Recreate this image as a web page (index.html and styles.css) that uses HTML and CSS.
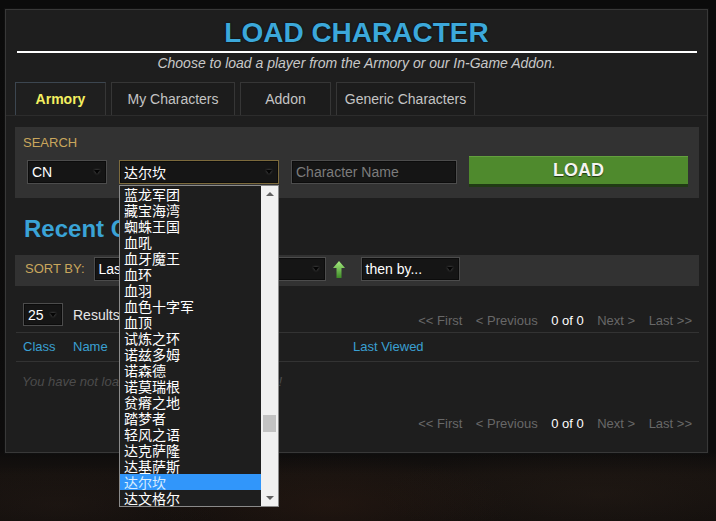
FILE: index.html
```html
<!DOCTYPE html>
<html lang="en">
<head>
    <meta charset="UTF-8">
    <title>Load Character</title>
    <link rel="stylesheet" href="styles.css">
</head>
<body>
    <div class="panel">
        <h1 class="title">LOAD CHARACTER</h1>
        <div class="title-rule"></div>
        <p class="subtitle">Choose to load a player from the Armory or our In-Game Addon.</p>

        <div class="tabs">
            <a href="#" class="tab tab-armory active">Armory</a>
            <a href="#" class="tab tab-mine">My Characters</a>
            <a href="#" class="tab tab-addon">Addon</a>
            <a href="#" class="tab tab-generic">Generic Characters</a>
        </div>

        <div class="tab-content">
            <div class="search-box">
                <div class="box-label">SEARCH</div>
                <div class="search-row">
                    <div class="select select-region">
                        <span>CN</span><span class="arrow"></span>
                    </div>
                    <div class="select select-realm focused">
                        <span class="cjk">达尔坎</span><span class="arrow"></span>
                        <div class="dropdown">
                            <ul class="dropdown-list">
                                <li>蓝龙军团</li>
                                <li>藏宝海湾</li>
                                <li>蜘蛛王国</li>
                                <li>血吼</li>
                                <li>血牙魔王</li>
                                <li>血环</li>
                                <li>血羽</li>
                                <li>血色十字军</li>
                                <li>血顶</li>
                                <li>试炼之环</li>
                                <li>诺兹多姆</li>
                                <li>诺森德</li>
                                <li>诺莫瑞根</li>
                                <li>贫瘠之地</li>
                                <li>踏梦者</li>
                                <li>轻风之语</li>
                                <li>达克萨隆</li>
                                <li>达基萨斯</li>
                                <li class="selected">达尔坎</li>
                                <li>达文格尔</li>
                            </ul>
                            <div class="scrollbar">
                                <span class="scroll-up"></span>
                                <span class="scroll-thumb"></span>
                                <span class="scroll-down"></span>
                            </div>
                        </div>
                    </div>
                    <input class="name-input" type="text" placeholder="Character Name">
                    <button class="load-button">LOAD</button>
                </div>
            </div>

            <h2 class="recent-title">Recent Characters</h2>

            <div class="sort-bar">
                <div class="box-label">SORT BY:</div>
                <div class="select select-sort">
                    <span>Last Viewed</span><span class="arrow"></span>
                </div>
                <svg class="sort-dir" width="12" height="17" viewBox="0 0 12 17">
                    <defs>
                        <linearGradient id="arrowGreen" x1="0" y1="0" x2="0" y2="1">
                            <stop offset="0" stop-color="#a6ec80"/>
                            <stop offset="1" stop-color="#3d8a26"/>
                        </linearGradient>
                    </defs>
                    <path d="M6 0 L12 7 H8.5 V17 H3.5 V7 H0 Z" fill="url(#arrowGreen)"/>
                </svg>
                <div class="select select-then">
                    <span>then by...</span><span class="arrow"></span>
                </div>
            </div>

            <div class="results-row">
                <div class="results-left">
                    <div class="select select-count">
                        <span>25</span><span class="arrow"></span>
                    </div>
                    <span class="results-label">Results</span>
                </div>
                <div class="pager">
                    <a href="#">&lt;&lt; First</a>
                    <a href="#">&lt; Previous</a>
                    <span class="pager-count">0 of 0</span>
                    <a href="#">Next &gt;</a>
                    <a href="#">Last &gt;&gt;</a>
                </div>
            </div>

            <div class="table-head">
                <span class="col-class">Class</span>
                <span class="col-name">Name</span>
                <span class="col-viewed">Last Viewed</span>
            </div>
            <p class="empty-message">You have not loaded any characters recently!</p>

            <div class="pager pager-bottom">
                <a href="#">&lt;&lt; First</a>
                <a href="#">&lt; Previous</a>
                <span class="pager-count">0 of 0</span>
                <a href="#">Next &gt;</a>
                <a href="#">Last &gt;&gt;</a>
            </div>
        </div>
    </div>
</body>
</html>
```

FILE: styles.css
```css
* {
    margin: 0;
    padding: 0;
    box-sizing: border-box;
}

body {
    width: 716px;
    height: 521px;
    overflow: hidden;
    font-family: "Liberation Sans", Arial, "Noto Sans CJK SC", sans-serif;
    color: #ddd;
    background:
        radial-gradient(ellipse 180px 50px at 330px 505px, rgba(60, 34, 22, 0.3), transparent),
        radial-gradient(ellipse 220px 50px at 600px 495px, rgba(48, 36, 28, 0.3), transparent),
        radial-gradient(ellipse 160px 40px at 60px 505px, rgba(45, 32, 26, 0.3), transparent),
        linear-gradient(to bottom, #0b0b0b 0, #0d0c0c 450px, #17120f 475px, #130f0d 521px);
}

.panel {
    width: 703px;
    margin: 9px 0 0 5px;
    background-color: #1e1e1e;
    border: 1px solid #383838;
    box-shadow: 0 0 0 1px #101010;
    padding-bottom: 20px;
}

.title {
    margin-top: 7px;
    font-size: 28px;
    line-height: 32px;
    font-weight: bold;
    text-align: center;
    color: #3ca8da;
    text-shadow: 0 0 2px #06141c, 0 0 1px #000;
}

.title-rule {
    height: 2px;
    margin: 2px 10px 0 11px;
    background-color: #fff;
}

.subtitle {
    margin-top: 2px;
    font-size: 14px;
    line-height: 16px;
    font-style: italic;
    text-align: center;
    color: #c8c8c8;
}

.tabs {
    display: flex;
    gap: 5px;
    margin: 11px 0 0 9px;
    height: 33px;
}

.tab {
    display: flex;
    align-items: center;
    justify-content: center;
    height: 33px;
    padding-bottom: 1px;
    font-size: 14px;
    color: #c4c4c4;
    text-decoration: none;
    background-color: #1c1c1c;
    border: 1px solid #363636;
    border-bottom: none;
}

.tab.active {
    color: #f4f060;
    font-weight: bold;
    background-color: #1f1f1f;
    border-color: #3c4650 #363636 #363636 #3c4650;
}

.tab-armory { width: 91px; }
.tab-mine { width: 124px; }
.tab-addon { width: 91px; }
.tab-generic { width: 139px; }

.tab-content {
    border-top: 1px solid #2c2c2c;
    padding: 11px 8px 0 9px;
}

.search-box {
    background-color: #323232;
    padding: 8px 10px 11px 8px;
    height: 71px;
}

.box-label {
    font-size: 13px;
    line-height: 16px;
    color: #c9a65c;
}

.search-row {
    display: flex;
    align-items: center;
    gap: 12px;
    margin-top: 5px;
    padding-left: 4px;
    height: 31px;
}

.select {
    position: relative;
    display: flex;
    align-items: center;
    justify-content: space-between;
    height: 24px;
    padding: 0 6px 0 4px;
    font-size: 14px;
    color: #fff;
    background-color: #151515;
    border: 1px solid #4c4c4c;
    box-shadow: inset 0 0 0 1px #0c0c0c;
}

.select .arrow {
    width: 0;
    height: 0;
    border-left: 3px solid transparent;
    border-right: 3px solid transparent;
    border-top: 4px solid #050505;
    filter: drop-shadow(0 0 1px #666);
}

.select-region { width: 80px; }

.select-realm {
    width: 160px;
    border-color: #7c6a3c;
}

.cjk {
    font-family: "Noto Sans CJK SC", sans-serif;
    font-size: 14px;
}

.dropdown {
    position: absolute;
    top: 24px;
    left: -1px;
    z-index: 10;
    display: flex;
    width: 160px;
    height: 322px;
    background-color: #1e1e1e;
    border: 1px solid #8a8a8a;
}

.dropdown-list {
    list-style: none;
    width: 141px;
    font-family: "Noto Sans CJK SC", sans-serif;
    font-size: 14px;
    line-height: 16px;
    color: #fff;
}

.dropdown-list li {
    height: 16px;
    padding-left: 4px;
    white-space: nowrap;
}

.dropdown-list li.selected {
    background-color: #3196fa;
    color: #d6ecff;
}

.scrollbar {
    position: relative;
    width: 17px;
    background-color: #f0f0f0;
}

.scroll-up,
.scroll-down {
    position: absolute;
    left: 5px;
    width: 0;
    height: 0;
    border-left: 4px solid transparent;
    border-right: 4px solid transparent;
}

.scroll-up {
    top: 6px;
    border-bottom: 4px solid #606060;
}

.scroll-down {
    bottom: 6px;
    border-top: 4px solid #606060;
}

.scroll-thumb {
    position: absolute;
    top: 229px;
    left: 2px;
    width: 13px;
    height: 17px;
    background-color: #c2c2c2;
}

.name-input {
    width: 166px;
    height: 24px;
    padding: 0 4px;
    font-family: "Liberation Sans", Arial, sans-serif;
    font-size: 14px;
    color: #fff;
    background-color: #151515;
    border: 1px solid #4c4c4c;
    box-shadow: inset 0 0 0 1px #0c0c0c;
    outline: none;
}

.name-input::placeholder {
    color: #7c7c7c;
}

.load-button {
    width: 219px;
    height: 31px;
    font-family: "Liberation Sans", Arial, sans-serif;
    font-size: 18px;
    font-weight: bold;
    color: #f4f4f0;
    background-color: #4f8a2d;
    border: none;
    border-bottom: 3px solid #203a14;
    box-shadow: inset 0 1px 0 #63a03e;
    text-shadow: 0 1px 1px #1c3310;
    cursor: pointer;
}

.recent-title {
    margin: 17px 0 0 9px;
    font-size: 24px;
    line-height: 28px;
    font-weight: bold;
    color: #3aa3d6;
}

.sort-bar {
    display: flex;
    align-items: center;
    margin-top: 12px;
    padding: 2px 10px 5px 10px;
    background-color: #323232;
}

.select-sort {
    width: 232px;
    margin-left: 9px;
}

.sort-dir {
    margin: 0 16px 0 7px;
}

.select-then { width: 99px; }

.results-row {
    display: flex;
    justify-content: space-between;
    height: 26px;
    margin-top: 17px;
    padding: 0 7px 0 8px;
}

.results-left {
    display: flex;
    align-items: center;
    gap: 10px;
    height: 23px;
}

.select-count {
    width: 40px;
    height: 23px;
}

.results-label {
    font-size: 14px;
    color: #e6e6e6;
}

.pager {
    display: flex;
    gap: 13.5px;
    align-self: flex-end;
    font-size: 13px;
    line-height: 16px;
}

.pager a {
    color: #686868;
    text-decoration: none;
}

.pager-count {
    color: #fff;
}

.pager-bottom {
    justify-content: flex-end;
    margin-top: 26px;
    padding-right: 7px;
}

.table-head {
    display: flex;
    margin: 3px 0 0 1px;
    height: 30px;
    padding-left: 7px;
    line-height: 28px;
    font-size: 13px;
    color: #3aa0d2;
    border-top: 1px solid #333;
    border-bottom: 1px solid #333;
}

.col-class { width: 50px; }
.col-name { width: 280px; }

.empty-message {
    margin-top: 12px;
    padding-left: 7px;
    font-size: 13px;
    line-height: 16px;
    font-style: italic;
    color: #4c4c4c;
}
```
